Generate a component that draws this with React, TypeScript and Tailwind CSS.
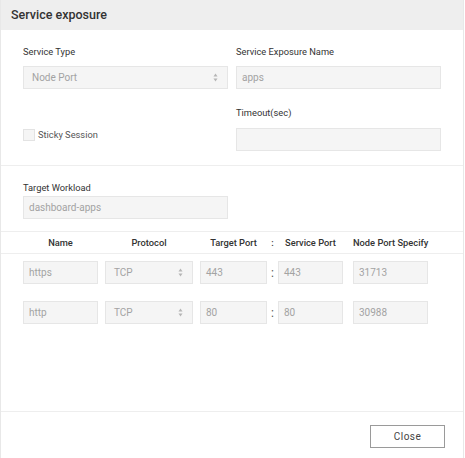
import React from "react";

const font = { fontFamily: "Roboto, 'Liberation Sans', sans-serif" };

function Arrows() {
  return (
    <svg width="5" height="9" viewBox="0 0 5 9" className="shrink-0">
      <path d="M2.5 0.5 L4.5 3.5 L0.5 3.5 Z" fill="#b5b5b5" />
      <path d="M2.5 8.5 L4.5 5.5 L0.5 5.5 Z" fill="#b5b5b5" />
    </svg>
  );
}

function Box({ value, w, select = false }: { value: string; w: string; select?: boolean }) {
  return (
    <div
      className={`${w} h-[23px] flex items-center justify-between border border-[#e6e6e6] bg-[#f5f5f5] text-[10px] text-[#a3a3a3] ${select ? "pl-[8px] pr-[9px]" : "px-[5px]"}`}
    >
      <span>{value}</span>
      {select && <Arrows />}
    </div>
  );
}

const Label = ({ children }: { children: React.ReactNode }) => (
  <div className="text-[9.3px] leading-[14px] text-[#333]">{children}</div>
);

const ports = [
  { name: "https", target: "443", service: "443", node: "31713" },
  { name: "http", target: "80", service: "80", node: "30988" },
];

export default function App() {
  return (
    <div className="w-[465px] h-[458px] bg-white flex flex-col overflow-hidden" style={font}>
      <div className="w-[464px] h-full flex flex-col border-x border-[#e8e8e8]">
        {/* Header */}
        <div className="h-[30px] shrink-0 bg-[#eeeeee] flex items-center px-[10px] text-[12.5px] font-medium text-[#333]">
          Service exposure
        </div>

        {/* Top section */}
        <div className="px-[22px] pt-[15px] pb-[14px] border-b border-[#eeeeee]">
          <div className="grid grid-cols-[205px_205px] gap-x-[8px]">
            <div>
              <Label>Service Type</Label>
              <div className="mt-[7px]">
                <Box value="Node Port" w="w-[205px]" select />
              </div>
            </div>
            <div>
              <Label>Service Exposure Name</Label>
              <div className="mt-[7px]">
                <Box value="apps" w="w-[205px]" />
              </div>
            </div>
            <div className="flex items-end pb-[9px]">
              <div className="flex items-center gap-[3px]">
                <div className="w-[12px] h-[12px] border border-[#e3e3e3] bg-[#f5f5f5]" />
                <span className="text-[9.3px] text-[#555]">Sticky Session</span>
              </div>
            </div>
            <div className="pt-[17px]">
              <Label>Timeout(sec)</Label>
              <div className="mt-[8px]">
                <Box value="" w="w-[205px]" />
              </div>
            </div>
          </div>
        </div>

        {/* Target workload */}
        <div className="px-[22px] pt-[15px] pb-[12px]">
          <Label>Target Workload</Label>
          <div className="mt-[1px]">
            <Box value="dashboard-apps" w="w-[205px]" />
          </div>
        </div>

        {/* Ports table */}
        <div className="flex-1 border-t border-[#eeeeee]">
          <div className="h-[22px] border-b border-[#eeeeee] flex items-center pl-[22px] text-[9.3px] font-medium text-[#333] whitespace-nowrap">
            <div className="w-[75px] text-center">Name</div>
            <div className="w-[88px] ml-[7px] text-center">Protocol</div>
            <div className="w-[67px] ml-[7px] text-center">Target Port</div>
            <div className="w-[11px] text-center">:</div>
            <div className="w-[65px] text-center">Service Port</div>
            <div className="w-[75px] ml-[10px] text-center">Node Port Specify</div>
          </div>
          <div className="pl-[22px] pt-[7px] flex flex-col gap-[17px]">
            {ports.map((p) => (
              <div key={p.name} className="flex items-center">
                <Box value={p.name} w="w-[75px]" />
                <div className="ml-[7px]">
                  <Box value="TCP" w="w-[88px]" select />
                </div>
                <div className="ml-[7px]">
                  <Box value={p.target} w="w-[67px]" />
                </div>
                <div className="w-[11px] text-center text-[12px] text-[#555]">:</div>
                <Box value={p.service} w="w-[65px]" />
                <div className="ml-[10px]">
                  <Box value={p.node} w="w-[75px]" />
                </div>
              </div>
            ))}
          </div>
        </div>

        {/* Footer */}
        <div className="h-[47px] shrink-0 border-t border-[#eeeeee] flex justify-end items-start pt-[13px] pr-[18px]">
          <button className="w-[75px] h-[23px] border border-[#9a9a9a] bg-white text-[10px] tracking-[0.05em] text-[#444]">
            Close
          </button>
        </div>
      </div>
    </div>
  );
}
